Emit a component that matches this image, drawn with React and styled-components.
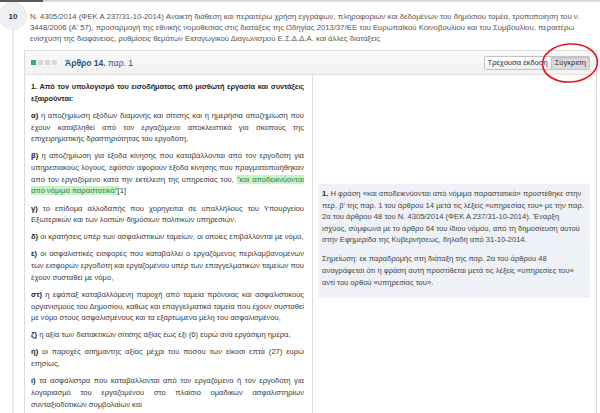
import React from "react";
import styled, { createGlobalStyle } from "styled-components";

const Global = createGlobalStyle`
  html, body { margin: 0; padding: 0; background: #fff; }
  body { font-family: "Liberation Sans", Arial, sans-serif; color: #333; }
  * { box-sizing: border-box; }
`;

const Page = styled.div`
  position: relative;
  width: 600px;
  height: 413px;
  overflow: hidden;
  background: #fff;
`;

const TopRule = styled.div`
  height: 2px;
  background: linear-gradient(#d0d0d0, #e4e4e4);
  display: flex;
`;

const TopRuleDark = styled.div`
  width: 43px;
  background: #5a5a5a;
`;

const Entry = styled.div`
  display: flex;
  height: 411px;
`;

const Rail = styled.div`
  width: 24px;
  flex: none;
  display: flex;
  flex-direction: column;
  align-items: flex-start;
  position: relative;
  z-index: 1;
`;

const Badge = styled.div`
  width: 28px;
  height: 28px;
  margin-left: -1px;
  border-radius: 50%;
  background: #eef0f4;
  border: 1px solid #e3e6eb;
  display: flex;
  align-items: center;
  justify-content: center;
  font-size: 8px;
  font-weight: bold;
  color: #333;
  flex: none;
`;

const RailLine = styled.div`
  width: 2px;
  margin-left: 12px;
  flex: 1;
  background: #e7eaee;
`;

const Main = styled.div`
  flex: 1;
  display: flex;
  flex-direction: column;
  min-width: 0;
  padding-right: 3px;
`;

const Title = styled.div`
  margin: 9px 0 0 6px;
  width: 550px;
  font-size: 7.75px;
  line-height: 11px;
  color: #555;
`;

const Card = styled.div`
  margin-top: 6px;
  border: 1px solid #dcdcdc;
  border-bottom: none;
  flex: 1;
  display: flex;
  flex-direction: column;
`;

const CardHeader = styled.div`
  height: 24px;
  flex: none;
  display: flex;
  align-items: center;
  padding: 0 6px;
  background: linear-gradient(#fafafa, #f2f2f2);
  border-bottom: 1px solid #e2e2e2;
`;

const Squares = styled.div`
  display: flex;
  gap: 2px;
  margin-right: 8px;
`;

const Square = styled.span`
  width: 5px;
  height: 5px;
  background: ${(p) => (p.$on ? "#3aa783" : "#d9d9d9")};
`;

const ArticleLabel = styled.div`
  font-size: 8.5px;
  color: #2b4c8c;
  b { font-weight: bold; }
`;

const BtnGroup = styled.div`
  margin-left: auto;
  display: flex;
  border: 1px solid #c4c4c4;
  border-radius: 2px;
  overflow: hidden;
`;

const Btn = styled.div`
  height: 12px;
  padding: 0 3px;
  display: flex;
  align-items: center;
  font-size: 7.6px;
  color: #333;
  background: ${(p) => (p.$active ? "#dcdcdc" : "linear-gradient(#fff, #f1f1f1)")};
  box-shadow: ${(p) => (p.$active ? "inset 0 1px 2px rgba(0,0,0,0.15)" : "none")};
  & + & { border-left: 1px solid #c4c4c4; }
`;

const CardBody = styled.div`
  flex: 1;
  display: grid;
  grid-template-columns: 288px 1fr;
`;

const LeftCol = styled.div`
  border-right: 1px solid #dedede;
  padding: 6px 8px 0 6px;
`;

const Para = styled.p`
  margin: 0 0 5.4px;
  font-size: ${(p) => (p.$strong ? "7.45px" : "7.6px")};
  letter-spacing: ${(p) => (p.$strong ? "-0.08px" : "0")};
  line-height: 11.7px;
  text-align: justify;
  color: ${(p) => (p.$strong ? "#2a2a2a" : "#3a3a3a")};
  font-weight: ${(p) => (p.$strong ? "bold" : "normal")};
  b { color: #222; }
`;

const Highlight = styled.span`
  background: #c9f1c9;
  color: #3c7f3c;
`;

const RightCol = styled.div`
  padding: 109px 6px 0 5px;
`;

const Note = styled.div`
  background: #eef2f7;
  padding: 4px 6px 2px 4px;
`;

const NotePara = styled.p`
  margin: 0 0 7.5px;
  font-size: 7.6px;
  line-height: 11.6px;
  color: #444;
  b { color: #222; }
`;

const Annotation = styled.svg`
  position: absolute;
  left: 538px;
  top: 40px;
  width: 62px;
  height: 46px;
  pointer-events: none;
`;

export default function App() {
  return (
    <Page>
      <Global />
      <TopRule>
        <TopRuleDark />
      </TopRule>
      <Entry>
        <Rail>
          <Badge>10</Badge>
          <RailLine />
        </Rail>
        <Main>
          <Title>
            N. 4305/2014 (ΦΕΚ Α 237/31-10-2014) Ανοικτή διάθεση και περαιτέρω χρήση εγγράφων, πληροφοριών και δεδομένων του δημόσιου τομέα, τροποποίηση του ν. 3448/2006 (Α' 57), προσαρμογή της εθνικής νομοθεσίας στις διατάξεις της Οδηγίας 2013/37/ΕΕ του Ευρωπαϊκού Κοινοβουλίου και του Συμβουλίου, περαιτέρω ενίσχυση της διαφάνειας, ρυθμίσεις θεμάτων Εισαγωγικού Διαγωνισμού Ε.Σ.Δ.Δ.Α. και άλλες διατάξεις
          </Title>
          <Card>
            <CardHeader>
              <Squares>
                <Square $on />
                <Square />
                <Square />
                <Square />
              </Squares>
              <ArticleLabel>
                <b>Άρθρο 14.</b> παρ. 1
              </ArticleLabel>
              <BtnGroup>
                <Btn>Τρέχουσα έκδοση</Btn>
                <Btn $active>Σύγκριση</Btn>
              </BtnGroup>
            </CardHeader>
            <CardBody>
              <LeftCol>
                <Para $strong>
                  1. Από τον υπολογισμό του εισοδήματος από μισθωτή εργασία και συντάξεις εξαιρούνται:
                </Para>
                <Para>
                  <b>α)</b> η αποζημίωση εξόδων διαμονής και σίτισης και η ημερήσια αποζημίωση που έχουν καταβληθεί από τον εργαζόμενο αποκλειστικά για σκοπούς της επιχειρηματικής δραστηριότητας του εργοδότη,
                </Para>
                <Para>
                  <b>β)</b> η αποζημίωση για έξοδα κίνησης που καταβάλλονται από τον εργοδότη για υπηρεσιακούς λόγους, εφόσον αφορούν έξοδα κίνησης που πραγματοποιήθηκαν από τον εργαζόμενο κατά την εκτέλεση της υπηρεσίας του,{" "}
                  <Highlight>"και αποδεικνύονται από νόμιμα παραστατικά"</Highlight>[1]
                </Para>
                <Para>
                  <b>γ)</b> το επίδομα αλλοδαπής που χορηγείται σε υπαλλήλους του Υπουργείου Εξωτερικών και των λοιπών δημόσιων πολιτικών υπηρεσιών,
                </Para>
                <Para>
                  <b>δ)</b> οι κρατήσεις υπέρ των ασφαλιστικών ταμείων, οι οποίες επιβάλλονται με νόμο,
                </Para>
                <Para>
                  <b>ε)</b> οι ασφαλιστικές εισφορές που καταβάλλει ο εργαζόμενος περιλαμβανομένων των εισφορών εργοδότη και εργαζομένου υπέρ των επαγγελματικών ταμείων που έχουν συσταθεί με νόμο,
                </Para>
                <Para>
                  <b>στ)</b> η εφάπαξ καταβαλλόμενη παροχή από ταμεία πρόνοιας και ασφαλιστικούς οργανισμούς του Δημοσίου, καθώς και επαγγελματικά ταμεία που έχουν συσταθεί με νόμο στους ασφαλισμένους και τα εξαρτώμενα μέλη του ασφαλισμένου,
                </Para>
                <Para>
                  <b>ζ)</b> η αξία των διατακτικών σίτισης αξίας έως έξι (6) ευρώ ανά εργάσιμη ημέρα,
                </Para>
                <Para>
                  <b>η)</b> οι παροχές ασήμαντης αξίας μέχρι του ποσού των είκοσι επτά (27) ευρώ ετησίως,
                </Para>
                <Para>
                  <b>ι)</b> τα ασφάλιστρα που καταβάλλονται από τον εργαζόμενο ή τον εργοδότη για λογαριασμό του εργαζομένου στο πλαίσιο ομαδικών ασφαλιστηρίων συνταξιοδοτικών συμβολαίων και
                </Para>
              </LeftCol>
              <RightCol>
                <Note>
                  <NotePara>
                    <b>1.</b> Η φράση «και αποδεικνύονται από νόμιμα παραστατικά» προστέθηκε στην περ. β' της παρ. 1 του άρθρου 14 μετά τις λέξεις «υπηρεσίας του» με την παρ. 2α του άρθρου 48 του Ν. 4305/2014 (ΦΕΚ Α 237/31-10-2014). Έναρξη ισχύος, σύμφωνα με το άρθρο 64 του ίδιου νόμου, από τη δημοσίευση αυτού στην Εφημερίδα της Κυβερνήσεως, δηλαδή από 31-10-2014.
                  </NotePara>
                  <NotePara>
                    Σημείωση: εκ παραδρομής στη διάταξη της παρ. 2α του άρθρου 48 αναγράφεται ότι η φράση αυτή προστίθεται μετά τις λέξεις «υπηρεσίες του» αντί του ορθού «υπηρεσίας του».
                  </NotePara>
                </Note>
              </RightCol>
            </CardBody>
          </Card>
        </Main>
      </Entry>
      <Annotation viewBox="0 0 62 46">
        <ellipse cx="32" cy="23" rx="27.5" ry="19" fill="none" stroke="#e0161b" strokeWidth="1.6" transform="rotate(-4 32 23)" />
      </Annotation>
    </Page>
  );
}
